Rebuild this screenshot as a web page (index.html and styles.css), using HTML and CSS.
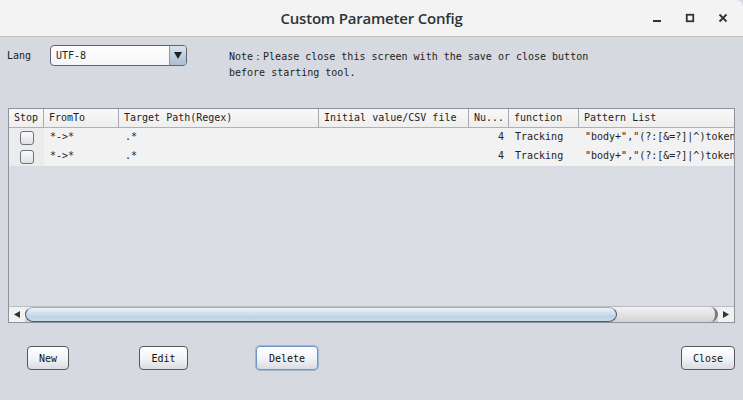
FILE: index.html
```html
<!DOCTYPE html>
<html>
<head>
<meta charset="utf-8">
<link rel="stylesheet" href="styles.css">
</head>
<body>
<div class="window">
  <div class="titlebar">
    <div class="title">Custom Parameter Config</div>
    <div class="wctl">
      <span class="wbtn"><svg width="12" height="12" viewBox="0 0 12 12"><rect x="2" y="8" width="8" height="2" fill="#2e3436"/></svg></span>
      <span class="wbtn"><svg width="12" height="12" viewBox="0 0 12 12"><rect x="2.75" y="2.75" width="6.5" height="6.5" fill="none" stroke="#2e3436" stroke-width="1.8"/></svg></span>
      <span class="wbtn"><svg width="12" height="12" viewBox="0 0 12 12"><path d="M2.5 2.5 L9.5 9.5 M9.5 2.5 L2.5 9.5" stroke="#2e3436" stroke-width="1.8"/></svg></span>
    </div>
  </div>
  <div class="content">
    <div class="toprow">
      <div class="lang">Lang</div>
      <div class="combo">
        <span class="combo-text">UTF-8</span>
        <span class="combo-arrow"><svg width="8" height="7" viewBox="0 0 8 7"><path d="M0 0 L8 0 L4 7 Z" fill="#222"/></svg></span>
      </div>
      <div class="note">Note：Please close this screen with the save or close button<br>before starting tool.</div>
    </div>
    <div class="table">
      <div class="viewport">
        <div class="hdr">
          <div class="c c1">Stop</div>
          <div class="c c2">FromTo</div>
          <div class="c c3">Target Path(Regex)</div>
          <div class="c c4">Initial value/CSV file</div>
          <div class="c c5">Nu...</div>
          <div class="c c6">function</div>
          <div class="c c7">Pattern List</div>
        </div>
        <div class="row">
          <div class="c c1 chkcell"><span class="chk"></span></div>
          <div class="c c2">*-&gt;*</div>
          <div class="c c3">.*</div>
          <div class="c c4"></div>
          <div class="c c5 num">4</div>
          <div class="c c6">Tracking</div>
          <div class="c c7">"body+","(?:[&amp;=?]|^)token</div>
        </div>
        <div class="row">
          <div class="c c1 chkcell"><span class="chk"></span></div>
          <div class="c c2">*-&gt;*</div>
          <div class="c c3">.*</div>
          <div class="c c4"></div>
          <div class="c c5 num">4</div>
          <div class="c c6">Tracking</div>
          <div class="c c7">"body+","(?:[&amp;=?]|^)token</div>
        </div>
      </div>
      <div class="hscroll">
        <span class="sarrow"><svg width="6" height="7" viewBox="0 0 6 7"><path d="M6 0 L6 7 L0 3.5 Z" fill="#333"/></svg></span>
        <div class="strack">
          <div class="sthumb"></div>
          <div class="srest"></div>
        </div>
        <span class="sarrow"><svg width="6" height="7" viewBox="0 0 6 7"><path d="M0 0 L0 7 L6 3.5 Z" fill="#333"/></svg></span>
      </div>
    </div>
    <div class="btnrow">
      <button class="btn b-new">New</button>
      <button class="btn b-edit">Edit</button>
      <button class="btn b-del focus">Delete</button>
      <div class="spacer"></div>
      <button class="btn b-close">Close</button>
    </div>
  </div>
</div>
</body>
</html>
```
FILE: styles.css
```css
* { box-sizing: border-box; }
html, body { margin: 0; padding: 0; }
body {
  width: 743px; height: 400px; overflow: hidden;
  background: #d6d9df;
  font-family: "DejaVu Sans Mono", monospace;
  font-size: 10px;
  color: #222;
}
.window { width: 743px; height: 400px; display: flex; flex-direction: column; }
.titlebar {
  height: 37px; flex: none;
  background: #f3f3f3;
  border-bottom: 1px solid #c5c2bd;
  border-top-right-radius: 7px;
  display: flex; align-items: center; justify-content: center;
  position: relative;
}
.title {
  font-family: "Open Sans", "Noto Sans", sans-serif;
  font-size: 15px; font-weight: 600; color: #2e3436;
  letter-spacing: -0.2px;
  margin-top: -1px;
}
.wctl {
  position: absolute; right: 14px; top: 12px;
  display: flex; gap: 21px;
}
.wbtn { width: 12px; height: 12px; display: block; }
.wbtn svg { display: block; }

.content { flex: 1; display: flex; flex-direction: column; }
.toprow { display: flex; align-items: flex-start; padding: 8px 0 0 7px; height: 71px; }
.lang { width: 43px; line-height: 22px; }
.combo {
  width: 137px; height: 21px;
  border: 1px solid #5d6470; border-radius: 4px;
  background: linear-gradient(#ffffff, #f4f5f7);
  display: flex; align-items: stretch;
  overflow: hidden;
}
.combo-text { flex: 1; padding-left: 5px; line-height: 19px; }
.combo-arrow {
  width: 17px; border-left: 1px solid #8795a8;
  background: linear-gradient(#d9e3ee, #a9bdd2);
  display: flex; align-items: center; justify-content: center;
}
.combo-arrow svg { display: block; }
.note { margin-left: 42px; margin-top: 4px; line-height: 16px; white-space: nowrap; }

.table {
  margin-left: 8px; width: 727px; height: 215px;
  border: 1px solid #8d939d;
  display: flex; flex-direction: column;
  background: #d9dce2;
}
.viewport { flex: 1; overflow: hidden; }
.hdr, .row { display: flex; white-space: nowrap; }
.hdr {
  height: 19px;
  background: linear-gradient(#f8f8f8, #eeeeee);
  border-bottom: 1px solid #aeb2b8;
}
.hdr .c { border-right: 1px solid #a8acb2; line-height: 18px; padding-left: 5px; }
.c { flex: none; overflow: hidden; }
.c1 { width: 35px; }
.c2 { width: 75px; }
.c3 { width: 200px; }
.c4 { width: 150px; }
.c5 { width: 40px; }
.c6 { width: 70px; }
.c7 { width: 160px; }
.hdr .c7 { border-right: none; }
.row { height: 19px; background: #f2f2f2; }
.row .c { line-height: 18px; padding-left: 6px; }
.row .chkcell { background: #ececec; padding-left: 0; display: flex; align-items: center; justify-content: center; }
.row .num { text-align: right; padding-right: 5px; padding-left: 0; }
.chk {
  width: 14px; height: 14px; display: block;
  border: 1px solid #6e737b; border-radius: 3px;
  background: linear-gradient(#fbfbfb, #dfe1e5);
}

.hscroll { height: 16px; flex: none; display: flex; border-top: 1px solid #b8bcc2; }
.sarrow {
  width: 16px; background: #f1f1f1;
  display: flex; align-items: center; justify-content: center;
}
.sarrow svg { display: block; }
.strack { flex: 1; display: flex; background: linear-gradient(#f0f0f0, #cfcfcf); }
.sthumb {
  width: 592px;
  border: 1px solid #4d5a6b; border-top-color: #9fb0c2;
  border-radius: 9px / 8px;
  background: linear-gradient(#eef3f8 0%, #d5e3ef 35%, #bcd2e5 70%, #cfdeeb 100%);
}
.srest {
  flex: 1;
  background: linear-gradient(#f2f2f2, #d3d3d3);
  border-right: 3px solid #7a7a7a;
  border-radius: 0 8px 8px 0 / 0 8px 8px 0;
}

.btnrow { display: flex; padding: 23px 8px 0 27px; }
.btn {
  height: 24px; padding: 0;
  font-family: "DejaVu Sans Mono", monospace; font-size: 10px; color: #111;
  border: 1px solid #56595e; border-radius: 4px;
  background: linear-gradient(#ffffff 0%, #f3f4f6 50%, #d9dce1 100%);
}
.b-new { width: 42px; margin-right: 70px; }
.b-edit { width: 49px; margin-right: 68px; }
.b-del { width: 62px; }
.b-close { width: 54px; }
.focus { border: 1px solid #6f95c2; box-shadow: 0 0 0 1px #9bb8d8; }
.spacer { flex: 1; }
```
